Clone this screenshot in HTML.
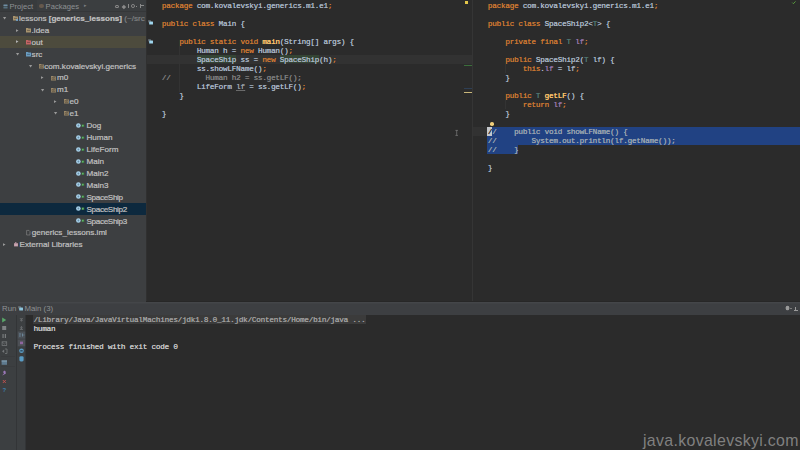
<!DOCTYPE html>
<html><head><meta charset="utf-8">
<style>
*{margin:0;padding:0;box-sizing:border-box}
html,body{width:800px;height:450px;overflow:hidden;background:#2b2b2b}
body{position:relative;font-family:"Liberation Sans",sans-serif}
.abs{position:absolute}
#side{left:0;top:0;width:146px;height:302px;background:#3d3f41;overflow:hidden}
#sidehdr{left:0;top:0;width:146px;height:12px;background:#3b3e40;border-bottom:1px solid #353739}
.tab{position:absolute;top:0.9px;height:12px;font-size:7.6px;line-height:12px;color:#8e9193;white-space:nowrap}
.row{position:absolute;left:0;width:146px;height:11.92px;font-size:8.1px;line-height:11.92px;color:#c2c2c2;white-space:nowrap}
.row b{font-weight:bold}
.row span.t{-webkit-text-stroke:0.2px currentColor}
.row span.t{position:absolute;top:0.9px}
.adown{position:absolute;top:5.2px;width:0;height:0;border-top:2.6px solid #a0a0a0;border-left:1.9px solid transparent;border-right:1.9px solid transparent}
.aright{position:absolute;top:4.4px;width:0;height:0;border-left:2.6px solid #a0a0a0;border-top:1.9px solid transparent;border-bottom:1.9px solid transparent}
.ficon{position:absolute;top:4.2px;width:5px;height:4.4px;border:1.1px solid #b49b6e;border-radius:0.6px}
.cicon{position:absolute;top:3.7px;width:4.8px;height:4.8px;border-radius:50%;background:#a8d4ee}
.carr{position:absolute;top:4.5px;width:0;height:0;border-left:3px solid #5aa25a;border-top:1.6px solid transparent;border-bottom:1.6px solid transparent}
.iml{position:absolute;top:3.6px;width:3.6px;height:5px;border:1px solid #9a9a9a;border-radius:1px}
.lib{position:absolute;top:4px;width:4.5px;height:4px;background:#c48a8a;border-radius:1px}
.code{position:absolute;font-family:"Liberation Mono",monospace;font-size:7.65px;letter-spacing:-0.218px;line-height:9px;height:9px;color:#a9b7c6;white-space:pre;padding-top:2.3px;text-shadow:0.15px 0 0}
.kw{color:#cc7832}
.fn{color:#ffc66d}
.tp{color:#507874}
.fd{color:#9876aa}
.cm{color:#808080}
.sc{color:#9ca6b0}
.dim{color:#a9b7c6}
.gbg{}
.unused{color:#9aa0a6;text-decoration:underline;text-decoration-color:#6a6a6a}
.con{color:#c8c8c8}
.cmd{color:#a0a0a0}
#runhdr{left:0;top:302px;width:800px;height:12.5px;background:#3d3f42;box-shadow:inset 0 1.5px 0 #444649}
#tb1{left:0;top:314.5px;width:16.5px;height:136px;background:#3c3f41;border-right:1px solid #333537}
#tb2{left:16.5px;top:314.5px;width:9.5px;height:136px;background:#3c3f41;border-right:1px solid #333537}
#wm{left:643px;top:431.9px;font-size:15.9px;letter-spacing:0.33px;color:#808080;white-space:nowrap}
.ico{position:absolute;overflow:visible}
</style></head><body>

<div id="side" class="abs">
 <div id="sidehdr" class="abs">
  <div class="abs" style="left:0;top:0;width:36.8px;height:11px;background:#383b3d"></div>
  <svg class="ico" style="left:3.4px;top:3.6px" width="5" height="5" viewBox="0 0 50 50"><rect x="4" y="4" width="42" height="16" rx="5" fill="#6f8ea3"/><rect x="4" y="24" width="42" height="22" rx="5" fill="#55707f"/></svg>
  <div class="tab" style="left:9.5px">Project</div>
  <div class="ico" style="left:39px;top:3.8px;width:4.8px;height:4.6px;background:#66594c;border-radius:50%"></div>
  <div class="tab" style="left:45.6px">Packages</div>
  <div class="tab" style="left:83.8px;top:-0.8px;font-size:5px;color:#7a7d80">&#9656;</div>
  <div class="ico" style="left:114.8px;top:4.5px;width:4.2px;height:3.8px;border:1.1px solid #8a8a8a;border-radius:50%"></div>
  <div class="ico" style="left:122px;top:4.5px;width:3.8px;height:3.8px;background:#8a8a8a;transform:rotate(45deg) scale(.8)"></div>
  <div class="ico" style="left:128px;top:4.3px;width:1px;height:4.2px;background:#8a8a8a"></div>
  <div class="ico" style="left:131.4px;top:4.4px;width:3.8px;height:3.8px;border:1.2px solid #8a8a8a;border-radius:50%"></div>
  <div class="ico" style="left:136px;top:6px;width:1px;height:1px;background:#8a8a8a"></div>
  <div class="ico" style="left:139.8px;top:4.4px;width:1.2px;height:4px;background:#8a8a8a"></div>
  <div class="ico" style="left:139.8px;top:4.8px;width:4px;height:1px;background:#8a8a8a"></div>
 </div>
<div class="row" style="top:12.00px;">
<svg class="ico" style="left:3.4px;top:5px" width="3.2" height="2.6" viewBox="0 0 32 26"><path d="M0 0H32L16 26Z" fill="#9a9a9a"/></svg>
<svg class="ico" style="left:13.4px;top:4px" width="5" height="4.4" viewBox="0 0 50 44"><path d="M0 0H20L25 6H50V44H0Z" fill="#a8946e"/><rect x="10" y="19" width="30" height="9" fill="#6e6150"/></svg>
<div class="ico" style="left:15.6px;top:6.6px;width:2.4px;height:2.4px;border-radius:50%;background:#6fa8d8"></div>
<span class="t" style="left:19.0px;">lessons <b>[generics_lessons]</b><span style="color:#7f8183"> (~/src</span></span></div>
<div class="row" style="top:23.92px;">
<svg class="ico" style="left:15.9px;top:4.6px" width="2.5" height="3.2" viewBox="0 0 28 32"><path d="M0 0L28 16L0 32Z" fill="#9a9a9a"/></svg>
<svg class="ico" style="left:26.0px;top:4px" width="5" height="4.4" viewBox="0 0 50 44"><path d="M0 0H20L25 6H50V44H0Z" fill="#a8946e"/><rect x="10" y="19" width="30" height="9" fill="#6e6150"/></svg>
<span class="t" style="left:31.6px;">.idea</span></div>
<div class="row" style="top:35.84px;background:#4d4b3d;">
<svg class="ico" style="left:15.9px;top:4.6px" width="2.5" height="3.2" viewBox="0 0 28 32"><path d="M0 0L28 16L0 32Z" fill="#b4b4b4"/></svg>
<svg class="ico" style="left:26.0px;top:4px" width="5" height="4.4" viewBox="0 0 50 44"><path d="M0 0H20L25 6H50V44H0Z" fill="#c46464"/><rect x="10" y="19" width="30" height="9" fill="#7a4646"/></svg>
<span class="t" style="left:31.6px;">out</span></div>
<div class="row" style="top:47.76px;">
<svg class="ico" style="left:16.1px;top:5px" width="3.2" height="2.6" viewBox="0 0 32 26"><path d="M0 0H32L16 26Z" fill="#9a9a9a"/></svg>
<svg class="ico" style="left:26.0px;top:4px" width="5" height="4.4" viewBox="0 0 50 44"><path d="M0 0H20L25 6H50V44H0Z" fill="#6a9cc0"/><rect x="10" y="19" width="30" height="9" fill="#4a6a82"/></svg>
<span class="t" style="left:31.6px;">src</span></div>
<div class="row" style="top:59.68px;">
<svg class="ico" style="left:28.7px;top:5px" width="3.2" height="2.6" viewBox="0 0 32 26"><path d="M0 0H32L16 26Z" fill="#9a9a9a"/></svg>
<svg class="ico" style="left:38.7px;top:4px" width="5" height="4.4" viewBox="0 0 50 44"><path d="M0 0H20L25 6H50V44H0Z" fill="#9c8a6a"/><rect x="7" y="13" width="36" height="24" fill="#5e5444"/><circle cx="18" cy="25" r="5" fill="#9c8a6a"/><circle cx="32" cy="25" r="5" fill="#9c8a6a"/></svg>
<span class="t" style="left:44.3px;">com.kovalevskyi.generics</span></div>
<div class="row" style="top:71.60px;">
<svg class="ico" style="left:41.3px;top:4.6px" width="2.5" height="3.2" viewBox="0 0 28 32"><path d="M0 0L28 16L0 32Z" fill="#9a9a9a"/></svg>
<svg class="ico" style="left:51.4px;top:4px" width="5" height="4.4" viewBox="0 0 50 44"><path d="M0 0H20L25 6H50V44H0Z" fill="#9c8a6a"/><rect x="7" y="13" width="36" height="24" fill="#5e5444"/><circle cx="18" cy="25" r="5" fill="#9c8a6a"/><circle cx="32" cy="25" r="5" fill="#9c8a6a"/></svg>
<span class="t" style="left:57.0px;">m0</span></div>
<div class="row" style="top:83.52px;">
<svg class="ico" style="left:41.4px;top:5px" width="3.2" height="2.6" viewBox="0 0 32 26"><path d="M0 0H32L16 26Z" fill="#9a9a9a"/></svg>
<svg class="ico" style="left:51.4px;top:4px" width="5" height="4.4" viewBox="0 0 50 44"><path d="M0 0H20L25 6H50V44H0Z" fill="#9c8a6a"/><rect x="7" y="13" width="36" height="24" fill="#5e5444"/><circle cx="18" cy="25" r="5" fill="#9c8a6a"/><circle cx="32" cy="25" r="5" fill="#9c8a6a"/></svg>
<span class="t" style="left:57.0px;">m1</span></div>
<div class="row" style="top:95.44px;">
<svg class="ico" style="left:53.9px;top:4.6px" width="2.5" height="3.2" viewBox="0 0 28 32"><path d="M0 0L28 16L0 32Z" fill="#9a9a9a"/></svg>
<svg class="ico" style="left:64.0px;top:4px" width="5" height="4.4" viewBox="0 0 50 44"><path d="M0 0H20L25 6H50V44H0Z" fill="#9c8a6a"/><rect x="7" y="13" width="36" height="24" fill="#5e5444"/><circle cx="18" cy="25" r="5" fill="#9c8a6a"/><circle cx="32" cy="25" r="5" fill="#9c8a6a"/></svg>
<span class="t" style="left:69.6px;">e0</span></div>
<div class="row" style="top:107.36px;">
<svg class="ico" style="left:54.0px;top:5px" width="3.2" height="2.6" viewBox="0 0 32 26"><path d="M0 0H32L16 26Z" fill="#9a9a9a"/></svg>
<svg class="ico" style="left:64.0px;top:4px" width="5" height="4.4" viewBox="0 0 50 44"><path d="M0 0H20L25 6H50V44H0Z" fill="#9c8a6a"/><rect x="7" y="13" width="36" height="24" fill="#5e5444"/><circle cx="18" cy="25" r="5" fill="#9c8a6a"/><circle cx="32" cy="25" r="5" fill="#9c8a6a"/></svg>
<span class="t" style="left:69.6px;">e1</span></div>
<div class="row" style="top:119.28px;">
<svg class="ico" style="left:76.0px;top:3.6px" width="8" height="5" viewBox="0 0 80 50"><circle cx="24" cy="25" r="23" fill="#a9d3ec"/><circle cx="24" cy="25" r="9" fill="#6a8fa8"/><rect x="56" y="14" width="26" height="26" fill="#3f7a45"/><path d="M62 18L80 27L62 36Z" fill="#6cc070"/></svg>
<span class="t" style="left:86.5px;">Dog</span></div>
<div class="row" style="top:131.20px;">
<svg class="ico" style="left:76.0px;top:3.6px" width="8" height="5" viewBox="0 0 80 50"><circle cx="24" cy="25" r="23" fill="#a9d3ec"/><circle cx="24" cy="25" r="9" fill="#6a8fa8"/><rect x="56" y="14" width="26" height="26" fill="#3f7a45"/><path d="M62 18L80 27L62 36Z" fill="#6cc070"/></svg>
<span class="t" style="left:86.5px;">Human</span></div>
<div class="row" style="top:143.12px;">
<svg class="ico" style="left:76.0px;top:3.6px" width="8" height="5" viewBox="0 0 80 50"><circle cx="24" cy="25" r="23" fill="#a9d3ec"/><circle cx="24" cy="25" r="9" fill="#6a8fa8"/><rect x="56" y="14" width="26" height="26" fill="#3f7a45"/><path d="M62 18L80 27L62 36Z" fill="#6cc070"/></svg>
<span class="t" style="left:86.5px;">LifeForm</span></div>
<div class="row" style="top:155.04px;">
<svg class="ico" style="left:76.0px;top:3.6px" width="8" height="5" viewBox="0 0 80 50"><circle cx="24" cy="25" r="23" fill="#a9d3ec"/><circle cx="24" cy="25" r="9" fill="#6a8fa8"/><rect x="56" y="14" width="26" height="26" fill="#3f7a45"/><path d="M62 18L80 27L62 36Z" fill="#6cc070"/></svg>
<span class="t" style="left:86.5px;">Main</span></div>
<div class="row" style="top:166.96px;">
<svg class="ico" style="left:76.0px;top:3.6px" width="8" height="5" viewBox="0 0 80 50"><circle cx="24" cy="25" r="23" fill="#a9d3ec"/><circle cx="24" cy="25" r="9" fill="#6a8fa8"/><rect x="56" y="14" width="26" height="26" fill="#3f7a45"/><path d="M62 18L80 27L62 36Z" fill="#6cc070"/></svg>
<span class="t" style="left:86.5px;">Main2</span></div>
<div class="row" style="top:178.88px;">
<svg class="ico" style="left:76.0px;top:3.6px" width="8" height="5" viewBox="0 0 80 50"><circle cx="24" cy="25" r="23" fill="#a9d3ec"/><circle cx="24" cy="25" r="9" fill="#6a8fa8"/><rect x="56" y="14" width="26" height="26" fill="#3f7a45"/><path d="M62 18L80 27L62 36Z" fill="#6cc070"/></svg>
<span class="t" style="left:86.5px;">Main3</span></div>
<div class="row" style="top:190.80px;">
<svg class="ico" style="left:76.0px;top:3.6px" width="8" height="5" viewBox="0 0 80 50"><circle cx="24" cy="25" r="23" fill="#a9d3ec"/><circle cx="24" cy="25" r="9" fill="#6a8fa8"/><rect x="56" y="14" width="26" height="26" fill="#3f7a45"/><path d="M62 18L80 27L62 36Z" fill="#6cc070"/></svg>
<span class="t" style="left:86.5px;letter-spacing:-0.32px;">SpaceShip</span></div>
<div class="row" style="top:202.72px;background:#0d293e;">
<svg class="ico" style="left:76.0px;top:3.6px" width="8" height="5" viewBox="0 0 80 50"><circle cx="24" cy="25" r="23" fill="#a9d3ec"/><circle cx="24" cy="25" r="9" fill="#6a8fa8"/><rect x="56" y="14" width="26" height="26" fill="#3f7a45"/><path d="M62 18L80 27L62 36Z" fill="#6cc070"/></svg>
<span class="t" style="left:86.5px;letter-spacing:-0.32px;">SpaceShip2</span></div>
<div class="row" style="top:214.64px;">
<svg class="ico" style="left:76.0px;top:3.6px" width="8" height="5" viewBox="0 0 80 50"><circle cx="24" cy="25" r="23" fill="#a9d3ec"/><circle cx="24" cy="25" r="9" fill="#6a8fa8"/><rect x="56" y="14" width="26" height="26" fill="#3f7a45"/><path d="M62 18L80 27L62 36Z" fill="#6cc070"/></svg>
<span class="t" style="left:86.5px;letter-spacing:-0.32px;">SpaceShip3</span></div>
<div class="row" style="top:226.56px;">
<svg class="ico" style="left:25.8px;top:3.6px" width="4.6" height="5.4" viewBox="0 0 46 54"><path d="M6 4H30L40 14V50H6Z" fill="none" stroke="#8a8a8a" stroke-width="6"/></svg>
<span class="t" style="left:31.8px;">generics_lessons.iml</span></div>
<div class="row" style="top:238.48px;">
<svg class="ico" style="left:3.3px;top:4.6px" width="2.5" height="3.2" viewBox="0 0 28 32"><path d="M0 0L28 16L0 32Z" fill="#9a9a9a"/></svg>
<svg class="ico" style="left:13.8px;top:3.6px" width="4" height="4.4" viewBox="0 0 44 50"><path d="M0 14H44V50H0Z" fill="#c9a3b0"/><rect x="14" y="0" width="8" height="16" fill="#c9a3b0"/><rect x="26" y="4" width="7" height="12" fill="#b08a98"/></svg>
<span class="t" style="left:19.5px;">External Libraries</span></div>
</div>
<div class="abs" style="left:146px;top:0;width:1px;height:302px;background:#303030"></div>

<div class="abs" style="left:147px;top:54.5px;width:325px;height:9px;background:#323232"></div>
<div class="abs" style="left:196.6px;top:54.6px;width:39.4px;height:8.6px;background:#344434"></div>
<div class="abs" style="left:279.6px;top:54.6px;width:39.4px;height:8.6px;background:#344434"></div>
<svg class="ico" style="left:148px;top:20.3px" width="5.2" height="4.8" viewBox="0 0 52 48"><rect x="0" y="0" width="30" height="24" rx="6" fill="#5a6268"/><rect x="12" y="16" width="38" height="30" rx="4" fill="#9fd6ee"/></svg>
<svg class="ico" style="left:148px;top:38.6px" width="5.2" height="4.8" viewBox="0 0 52 48"><rect x="0" y="0" width="30" height="24" rx="6" fill="#5a6268"/><rect x="12" y="16" width="38" height="30" rx="4" fill="#9fd6ee"/></svg>
<div class="abs" style="left:179px;top:45.5px;width:0.8px;height:46px;background:#333333"></div>
<div class="code" style="left:161.8px;top:-0.60px"><span class="kw">package</span> com.kovalevskyi.generics.m1.e1<span class="kw">;</span></div>
<div class="code" style="left:161.8px;top:17.40px"><span class="kw">public class </span>Main {</div>
<div class="code" style="left:161.8px;top:35.40px"><span class="kw">    public static void </span><span class="fn">main</span>(String[] args) {</div>
<div class="code" style="left:161.8px;top:44.40px">        Human <span class="dim">h</span> = <span class="kw">new </span>Human()<span class="kw">;</span></div>
<div class="code" style="left:161.8px;top:53.40px">        <span class="gbg">SpaceShip</span> ss = <span class="kw">new </span><span class="gbg">SpaceShip</span>(h)<span class="kw">;</span></div>
<div class="code" style="left:161.8px;top:62.40px">        ss.showLFName()<span class="kw">;</span></div>
<div class="code" style="left:161.8px;top:71.40px"><span class="cm">//        Human h2 = ss.getLF();</span></div>
<div class="code" style="left:161.8px;top:80.40px">        LifeForm <span class="unused">lf</span> = ss.getLF()<span class="kw">;</span></div>
<div class="code" style="left:161.8px;top:89.40px">    }</div>
<div class="code" style="left:161.8px;top:107.40px">}</div>
<div class="abs" style="left:464.7px;top:1px;width:3.4px;height:3px;background:#e4c74a"></div>
<div class="abs" style="left:464px;top:64.5px;width:8px;height:1px;background:#3b6e3b"></div>
<div class="abs" style="left:464px;top:88.2px;width:8px;height:1px;background:#2e3f55"></div>
<div class="abs" style="left:464px;top:92px;width:8px;height:1.2px;background:#c9b77a"></div>
<div class="abs" style="left:472px;top:0;width:1px;height:302px;background:#353535"></div>

<div class="abs" style="left:487px;top:126.8px;width:313px;height:18px;background:#214283"></div>
<div class="abs" style="left:487px;top:144.8px;width:31px;height:9.2px;background:#214283"></div>
<div class="abs" style="left:473px;top:127px;width:14px;height:9px;background:#323232"></div>
<div class="abs" style="left:505px;top:63.5px;width:0.8px;height:9px;background:#333333"></div>
<div class="abs" style="left:505px;top:99.5px;width:0.8px;height:9px;background:#333333"></div>
<div class="code" style="left:487.8px;top:-0.60px"><span class="kw">package</span> com.kovalevskyi.generics.m1.e1<span class="kw">;</span></div>
<div class="code" style="left:487.8px;top:17.40px"><span class="kw">public class </span>SpaceShip2&lt;<span class="tp">T</span>&gt; {</div>
<div class="code" style="left:487.8px;top:35.40px"><span class="kw">    private final </span><span class="tp">T </span><span class="fd">lf</span><span class="kw">;</span></div>
<div class="code" style="left:487.8px;top:53.40px"><span class="kw">    public </span>SpaceShip2(<span class="tp">T</span> lf) {</div>
<div class="code" style="left:487.8px;top:62.40px"><span class="kw">        this</span>.<span class="fd">lf</span> = lf<span class="kw">;</span></div>
<div class="code" style="left:487.8px;top:71.40px">    }</div>
<div class="code" style="left:487.8px;top:89.40px"><span class="kw">    public </span><span class="tp">T </span><span class="fn">getLF</span>() {</div>
<div class="code" style="left:487.8px;top:98.40px"><span class="kw">        return </span><span class="fd">lf</span><span class="kw">;</span></div>
<div class="code" style="left:487.8px;top:107.40px">    }</div>
<div class="code" style="left:487.8px;top:125.40px"><span class="sc">//    public void showLFName() {</span></div>
<div class="code" style="left:487.8px;top:134.40px"><span class="sc">//        System.out.println(lf.getName());</span></div>
<div class="code" style="left:487.8px;top:143.40px"><span class="sc">//    }</span></div>
<div class="code" style="left:487.8px;top:161.40px">}</div>
<div class="abs" style="left:487px;top:127px;width:4.6px;height:8.6px;background:#c5c8cc"></div>
<div class="code" style="left:487.8px;top:125.4px;color:#1e1e1e">/</div>
<div class="abs" style="left:490px;top:122.2px;width:3.6px;height:3.6px;background:#f2cf7a;border-radius:50%"></div>
<svg class="ico" style="left:454.6px;top:129.6px" width="3.4" height="5.8" viewBox="0 0 34 58"><path d="M4 4H30M4 54H30M17 4V54" stroke="#8a8a8a" stroke-width="6" fill="none"/></svg>
<svg class="ico" style="left:791.8px;top:0.8px" width="3.8" height="3.2" viewBox="0 0 38 32"><path d="M3 16L14 27L35 4" fill="none" stroke="#62b543" stroke-width="8"/></svg>

<div class="abs" style="left:146px;top:301px;width:654px;height:1px;background:#272727"></div>
<div id="runhdr" class="abs">
 <div class="tab" style="left:2px;top:0.6px;font-size:7.8px;color:#8e9193">Run</div>
 <svg class="ico" style="left:18px;top:3.8px" width="5.2" height="4.8" viewBox="0 0 52 48"><rect x="0" y="0" width="30" height="24" rx="6" fill="#62696e"/><rect x="12" y="16" width="38" height="30" rx="4" fill="#8cc4dc"/></svg>
 <div class="tab" style="left:24.5px;top:0.6px;font-size:7.8px;color:#8e9193">Main (3)</div>
 <div class="ico" style="left:785.8px;top:4.4px;width:3.6px;height:3.8px;background:#9a9a9a;border-radius:50%;box-shadow:0 0 0 0.3px #9a9a9a"></div>
 <div class="ico" style="left:790.4px;top:6.2px;width:1.6px;height:1px;background:#7a7a7a"></div>
 <div class="ico" style="left:795.4px;top:4.6px;width:0.9px;height:3.4px;background:#9a9a9a"></div>
 <div class="ico" style="left:793.6px;top:7.6px;width:4.2px;height:1px;background:#9a9a9a"></div>
</div>
<div id="tb1" class="abs">
 <svg class="ico" style="left:0;top:0" width="16" height="136" viewBox="0 0 160 1360">
  <path d="M22 25L62 50L22 75Z" fill="#59a869"/>
  <rect x="22" y="110" width="40" height="40" fill="#7f8284"/>
  <rect x="25" y="190" width="11" height="40" fill="#7f8284"/><rect x="48" y="190" width="11" height="40" fill="#7f8284"/>
  <rect x="21" y="268" width="46" height="36" fill="none" stroke="#75787a" stroke-width="8"/><path d="M21 270L44 290L67 270" fill="none" stroke="#75787a" stroke-width="6"/>
  <path d="M50 340H70V385H50" fill="none" stroke="#75787a" stroke-width="8"/><path d="M20 362L42 345V380Z" fill="#75787a"/>
  <rect x="10" y="411" width="140" height="5" fill="#36393b"/>
  <rect x="16" y="455" width="54" height="43" fill="#5f7b8f"/><rect x="16" y="455" width="54" height="10" fill="#8aa6b8"/>
  <rect x="10" y="511" width="140" height="5" fill="#36393b"/>
  <path d="M22 605L48 572L60 586Z" fill="#9a78b8"/><rect x="34" y="560" width="22" height="22" fill="#9a78b8" transform="rotate(45 45 571)"/>
  <path d="M28 650L58 680M58 650L28 680" stroke="#c75450" stroke-width="9"/>
  <text x="43" y="768" font-size="60" font-weight="bold" font-family="Liberation Sans" fill="#3d7fb0" text-anchor="middle">?</text>
 </svg>
</div>
<div id="tb2" class="abs">
 <svg class="ico" style="left:0;top:0" width="10" height="136" viewBox="0 0 100 1360">
  <rect x="28" y="35" width="32" height="6" fill="#7a7d7f"/><path d="M44 45V65M32 55L44 45L56 55" fill="none" stroke="#7a7d7f" stroke-width="7"/>
  <rect x="28" y="140" width="32" height="6" fill="#7a7d7f"/><path d="M44 110V136M32 126L44 136L56 126" fill="none" stroke="#7a7d7f" stroke-width="7"/>
  <rect x="8" y="165" width="74" height="72" fill="#4b5157"/><path d="M20 190H42M20 210H38M55 185V215M64 200H74" stroke="#7a9cb4" stroke-width="7"/>
  <rect x="8" y="245" width="74" height="68" fill="#4d5056"/><rect x="30" y="266" width="30" height="26" fill="#8f66a0"/>
  <circle cx="45" cy="358" r="23" fill="#5a9cc4"/><rect x="33" y="351" width="24" height="14" fill="#2e4a5e"/>
  <rect x="24" y="412" width="42" height="52" rx="14" fill="#5a9cc4"/>
 </svg>
</div>
<div class="abs" style="left:26px;top:314.5px;width:7px;height:136px;background:#2b2b2b"></div>
<div class="abs" style="left:33px;top:315px;width:332.6px;height:8.75px;background:#3b3b3b"></div>
<div class="code con cmd" style="left:33.5px;top:313.60px">/Library/Java/JavaVirtualMachines/jdk1.8.0_11.jdk/Contents/Home/bin/java ...</div>
<div class="code con out" style="left:33.5px;top:322.50px">human</div>
<div class="code con out" style="left:33.5px;top:340.30px">Process finished with exit code 0</div>

<div id="wm" class="abs">java.kovalevskyi.com</div>
</body></html>
